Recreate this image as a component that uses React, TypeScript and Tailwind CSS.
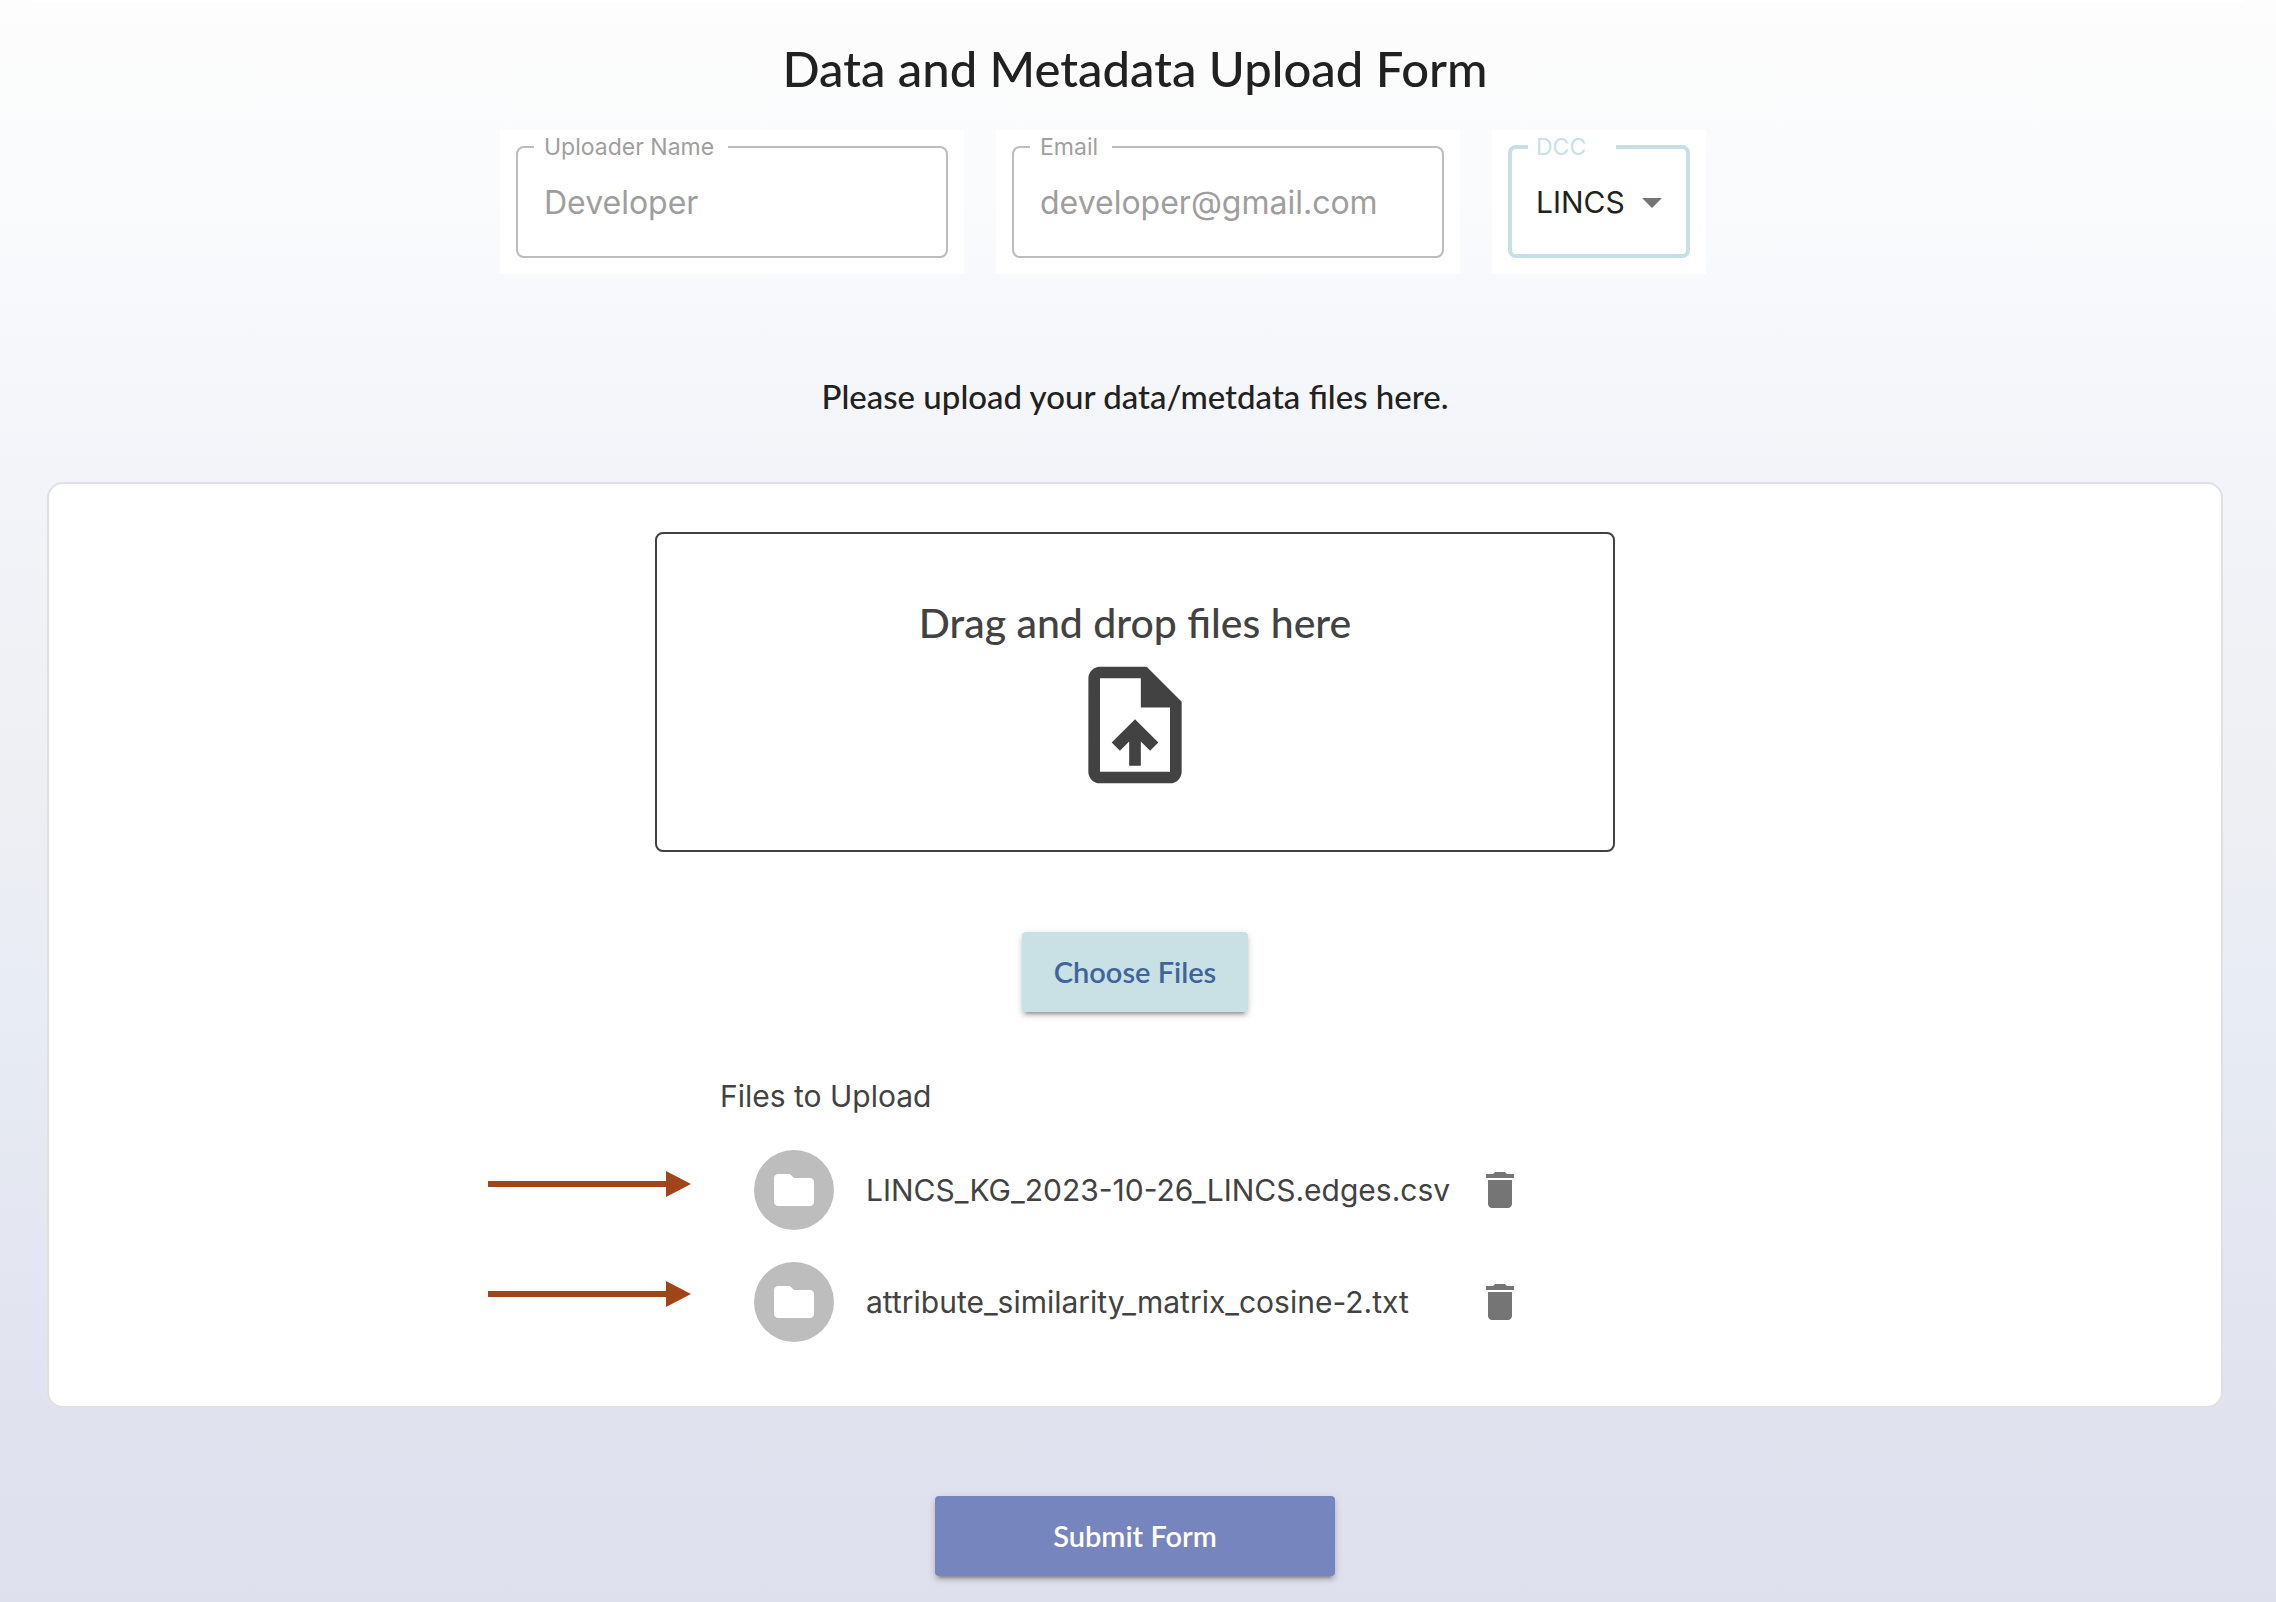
import React, { useState } from "react";

const FILES = [
  "LINCS_KG_2023-10-26_LINCS.edges.csv",
  "attribute_similarity_matrix_cosine-2.txt",
];

const DCCS = ["LINCS", "4DN", "GTEx", "HuBMAP"];

function ReadonlyField({ id, label, value, type }: { id: string; label: string; value: string; type: string }) {
  return (
    <div className="w-[464px] bg-white px-4 pb-4">
      <fieldset className="h-32 rounded-lg border-2 border-[#bdbdbd] px-4">
        <legend className="pl-2.5 pr-3.5 text-[23px] leading-[34px] text-[#9e9e9e]">
          <label htmlFor={id}>{label}</label>
        </legend>
        <input
          id={id}
          type={type}
          defaultValue={value}
          disabled
          className="block h-[76px] w-full bg-transparent px-2.5 text-[32px] text-[#9e9e9e]"
        />
      </fieldset>
    </div>
  );
}

function UploadFileIcon() {
  return (
    <svg viewBox="0 0 24 24" className="size-[140px]" fill="currentColor" aria-hidden="true">
      <path d="M14 2H6c-1.1 0-1.99.9-1.99 2L4 20c0 1.1.89 2 1.99 2H18c1.1 0 2-.9 2-2V8l-6-6zm4 18H6V4h7v5h5v11zM8 15.01l1.41 1.41L11 14.84V19h2v-4.16l1.59 1.59L16 15.01 12.01 11z" />
    </svg>
  );
}

function FolderIcon() {
  return (
    <svg viewBox="0 0 24 24" className="size-12" fill="currentColor" aria-hidden="true">
      <path d="M10 4H4c-1.1 0-1.99.9-1.99 2L2 18c0 1.1.9 2 2 2h16c1.1 0 2-.9 2-2V8c0-1.1-.9-2-2-2h-8l-2-2z" />
    </svg>
  );
}

function TrashIcon() {
  return (
    <svg viewBox="0 0 24 24" className="size-12" fill="currentColor" aria-hidden="true">
      <path d="M6 19c0 1.1.9 2 2 2h8c1.1 0 2-.9 2-2V7H6v12zM19 4h-3.5l-1-1h-5l-1 1H5v2h14V4z" />
    </svg>
  );
}

function Arrow() {
  return (
    <svg viewBox="0 0 203 26" className="h-[26px] w-[203px]" fill="#a0451a" aria-hidden="true">
      <path d="M0 10h178V0l25 13-25 13V16H0z" />
    </svg>
  );
}

export default function App() {
  const [files, setFiles] = useState(FILES);
  const [dcc, setDcc] = useState("LINCS");

  return (
    <div className="min-h-screen bg-[linear-gradient(180deg,#fdfdfd_0%,#f9fafc_15%,#f3f4f9_30%,#edeff3_50%,#e8ecf4_62%,#e1e4ef_86%,#dee1ed_100%)] font-[Inter,sans-serif] text-[#212121]">
      <main className="mx-8 border-t-2 border-white pl-[15px] pr-[21px]">
        <form className="flex flex-col items-center pb-6" onSubmit={(e) => e.preventDefault()}>
          <h1 className="mt-[34px] font-[Lato,sans-serif] text-[49px] font-medium leading-[64px]">
            Data and Metadata Upload Form
          </h1>

          <div className="mt-[30px] flex gap-8 pr-16">
            <ReadonlyField id="name" label="Uploader Name" value="Developer" type="text" />
            <ReadonlyField id="email" label="Email" value="developer@gmail.com" type="email" />
            <div className="w-[214px] bg-white px-4 pb-4">
              <fieldset className="h-32 rounded-lg border-4 border-[#c5dfe3] px-4">
                <legend className="w-[88px] pl-2 text-[23px] leading-[34px] text-[#c9e1e5]">
                  <label htmlFor="dcc">DCC</label>
                </legend>
                <div className="relative">
                  <select
                    id="dcc"
                    value={dcc}
                    onChange={(e) => setDcc(e.target.value)}
                    className="block h-[76px] w-full appearance-none bg-transparent pl-2 text-[30px] outline-none"
                  >
                    {DCCS.map((d) => (
                      <option key={d}>{d}</option>
                    ))}
                  </select>
                  <svg
                    viewBox="0 0 20 10"
                    className="pointer-events-none absolute right-2 top-[34px] h-2.5 w-5"
                    fill="#757575"
                    aria-hidden="true"
                  >
                    <path d="M0 0h20L10 10z" />
                  </svg>
                </div>
              </fieldset>
            </div>
          </div>

          <p className="mt-[98px] font-[Lato,sans-serif] text-[33px] font-medium leading-[48px]">
            Please upload your data/metdata files here.
          </p>

          <section className="mt-[62px] flex w-full flex-col items-center rounded-2xl border-2 border-[#e0e0e0] bg-white pb-16 pt-12 text-[#424242]">
            <div className="flex h-80 w-[960px] flex-col items-center justify-center gap-1 rounded-lg border-2 border-[#424242] pt-1.5">
              <p className="font-[Lato,sans-serif] text-[41px] font-medium leading-[56px]">Drag and drop files here</p>
              <UploadFileIcon />
            </div>

            <button
              type="button"
              className="mt-20 h-20 w-[226px] rounded bg-[#c9e1e5] font-[Lato,sans-serif] text-[29px] font-semibold text-[#41659a] shadow-[0_6px_2px_-4px_rgba(0,0,0,0.2),0_4px_4px_rgba(0,0,0,0.14),0_2px_10px_rgba(0,0,0,0.12)]"
            >
              Choose Files
            </button>

            <div className="mt-[60px] w-[830px]">
              <h2 className="text-[30px] leading-[48px]">Files to Upload</h2>
              <div className="relative mt-[30px]">
                <div className="absolute right-full top-[21px] mr-[29px] flex flex-col gap-[84px]">
                  <Arrow />
                  <Arrow />
                </div>
                <ul className="flex flex-col gap-8">
                  {files.map((name) => (
                    <li key={name} className="flex items-center gap-8 pl-[34px] pr-[26px]">
                      <span className="flex size-20 shrink-0 items-center justify-center rounded-full bg-[#bdbdbd] text-white">
                        <FolderIcon />
                      </span>
                      <span className="w-[578px] whitespace-nowrap text-[30px] leading-[48px]">{name}</span>
                      <button
                        type="button"
                        aria-label={`Remove ${name}`}
                        onClick={() => setFiles(files.filter((f) => f !== name))}
                        className="shrink-0 text-[#757575]"
                      >
                        <TrashIcon />
                      </button>
                    </li>
                  ))}
                </ul>
              </div>
            </div>
          </section>

          <button
            type="submit"
            className="mt-[88px] h-20 w-[400px] rounded bg-[#7685be] font-[Lato,sans-serif] text-[29px] font-semibold text-white shadow-[0_6px_2px_-4px_rgba(0,0,0,0.2),0_4px_4px_rgba(0,0,0,0.14),0_2px_10px_rgba(0,0,0,0.12)]"
          >
            Submit Form
          </button>
        </form>
      </main>
    </div>
  );
}
